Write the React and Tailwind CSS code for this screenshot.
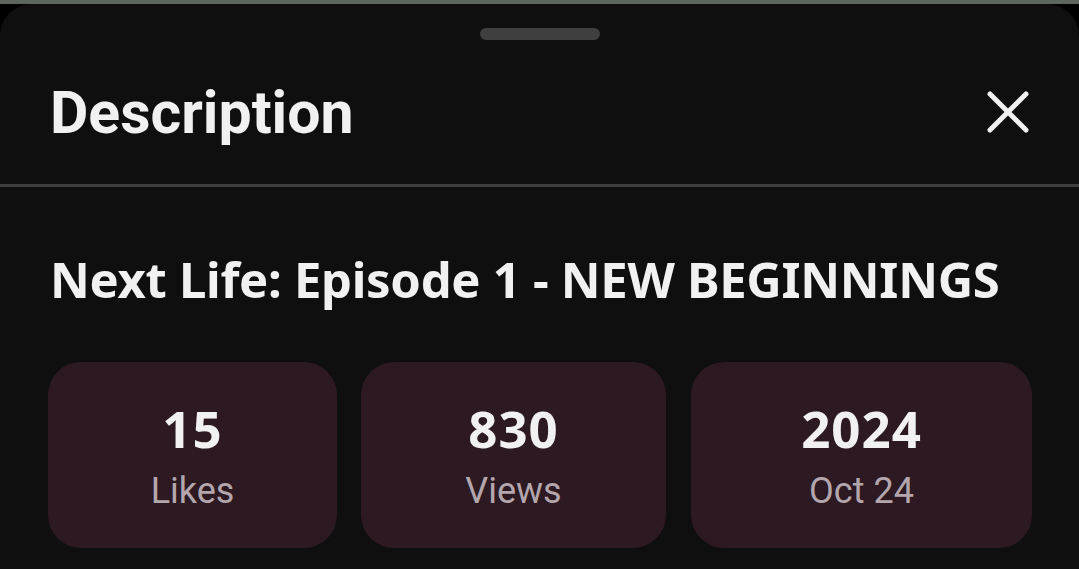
const stats = [
  { value: '15', label: 'Likes', w: 'w-[289px]' },
  { value: '830', label: 'Views', w: 'w-[305px]' },
  { value: '2024', label: 'Oct 24', w: 'w-[341px] ml-[1px]' },
]

function CloseIcon() {
  return (
    <svg width="42" height="42" viewBox="0 0 42 42" fill="none">
      <path d="M3 3L39 39M39 3L3 39" stroke="#f1f1f1" strokeWidth="5" strokeLinecap="round" />
    </svg>
  )
}

export default function App() {
  return (
    <div className="h-[569px] w-[1079px] overflow-hidden bg-black flex flex-col">
      <div className="h-[4px] bg-[#5d665d] shrink-0" />
      <div className="flex-1 bg-[#0f0f0f] rounded-t-[32px]">
        {/* drag handle */}
        <div className="pt-[24px] flex justify-center">
          <div className="w-[120px] h-[12px] rounded-full bg-[#3f3f3f]" />
        </div>

        {/* header */}
        <div className="h-[144px] flex items-center justify-between px-[50px]">
          <h1 className="text-[59px] leading-none font-bold text-[#f1f1f1] font-['Roboto',sans-serif]">
            Description
          </h1>
          <CloseIcon />
        </div>
        <div className="h-[3px] bg-[#3d3d3d]" />

        <div className="px-[50px]">
          <h2 className="mt-[62px] text-[49px] leading-[60px] font-bold text-[#f1f1f1] font-['Noto_Sans',sans-serif] tracking-[-0.3px] whitespace-nowrap">
            Next Life: Episode 1 - NEW BEGINNINGS
          </h2>

          <div className="mt-[53px] flex gap-[24px] -ml-[2px]">
            {stats.map(s => (
              <div key={s.label} className={`${s.w} h-[186px] shrink-0 rounded-[33px] bg-[#2d1922] flex flex-col items-center justify-center pt-[5px]`}>
                <p className="text-[51px] leading-[56px] font-bold tracking-[1px] text-[#f1f1f1] font-['Noto_Sans',sans-serif]">{s.value}</p>
                <p className="mt-[11px] text-[36px] leading-[48px] text-[#b3a6ac] font-['Roboto',sans-serif]">{s.label}</p>
              </div>
            ))}
          </div>
        </div>
      </div>
    </div>
  )
}
